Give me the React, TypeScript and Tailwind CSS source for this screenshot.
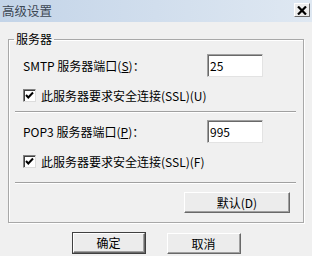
import React from "react";

const font = {
  fontFamily: '"Noto Sans CJK SC", "Noto Sans", sans-serif',
};

function Check() {
  return (
    <div className="w-[13px] h-[13px] bg-white border border-t-[#808080] border-l-[#808080] border-r-[#dcdcdc] border-b-[#dcdcdc] shadow-[inset_1px_1px_0_#404040] flex items-center justify-center">
      <svg width="9" height="9" viewBox="0 0 9 9">
        <path d="M1 4 L3.3 6.5 L8 1.5" stroke="#000" strokeWidth="2" fill="none" />
      </svg>
    </div>
  );
}

function Btn({ children, def, cls }: { children: React.ReactNode; def?: boolean; cls: string }) {
  const inner = (
    <div className="w-full h-full flex items-center justify-center bg-[#ececec] border border-t-white border-l-white border-r-[#696969] border-b-[#696969] shadow-[inset_-1px_-1px_0_#a0a0a0] text-[12px] leading-none text-black">
      {children}
    </div>
  );
  return def ? (
    <div className={`${cls} border border-[#404040]`}>{inner}</div>
  ) : (
    <div className={cls}>{inner}</div>
  );
}

function Input({ value }: { value: string }) {
  return (
    <div className="w-[56px] h-[23px] bg-white border border-t-[#a0a0a0] border-l-[#a0a0a0] border-r-[#e3e3e3] border-b-[#e3e3e3] shadow-[inset_1px_1px_0_#696969] flex items-center pl-[2px] text-[12px] leading-none text-black">
      {value}
    </div>
  );
}

function Sep() {
  return <div className="ml-[6px] mr-[7px] h-[2px] border-t border-t-[#a0a0a0] border-b border-b-white" />;
}

export default function App() {
  return (
    <div className="w-[312px] h-[256px] bg-[#f0f0f0] overflow-hidden" style={font}>
      <div className="h-[22px] flex items-center justify-between pl-[2px] pr-[2px] bg-[linear-gradient(to_right,#c3d4e8,#dfe8f2)]">
        <span className="text-[12.5px] leading-none text-[#3c4754]">高级设置</span>
        <div className="w-[16px] h-[14px] mb-[2px] bg-[#ececec] border border-t-white border-l-white border-r-[#696969] border-b-[#696969] flex items-center justify-center">
          <svg width="10" height="9" viewBox="0 0 10 9">
            <path d="M1 0.5 L9 8.5 M9 0.5 L1 8.5" stroke="#000" strokeWidth="2.2" fill="none" />
          </svg>
        </div>
      </div>
      <fieldset className="mx-[8px] mt-[10px] border border-[#a8a8a8] shadow-[1px_1px_0_#fff,inset_1px_1px_0_#fff] pb-[9px]">
        <legend className="ml-[5px] px-[2px] text-[12px] leading-[14px] text-black">服务器</legend>
        <div className="flex items-center mt-[8px]">
          <div className="pl-[14px] w-[198px] text-[12px] leading-none text-black">
            SMTP 服务器端口(<span className="underline">S</span>)：
          </div>
          <Input value="25" />
        </div>
        <div className="flex items-center gap-[5px] pl-[14px] mt-[12px] text-[12px] leading-[13px] text-black">
          <Check />
          <span>此服务器要求安全连接(SSL)(U)</span>
        </div>
        <div className="mt-[9px]">
          <Sep />
        </div>
        <div className="flex items-center mt-[7px]">
          <div className="pl-[14px] w-[198px] text-[12px] leading-none text-black">
            POP3 服务器端口(<span className="underline">P</span>)：
          </div>
          <Input value="995" />
        </div>
        <div className="flex items-center gap-[5px] pl-[14px] mt-[12px] text-[12px] leading-[13px] text-black">
          <Check />
          <span>此服务器要求安全连接(SSL)(F)</span>
        </div>
        <div className="mt-[14px]">
          <Sep />
        </div>
        <div className="flex justify-end pr-[13px] mt-[8px]">
          <Btn cls="w-[106px] h-[21px]">默认(D)</Btn>
        </div>
      </fieldset>
      <div className="flex justify-center gap-[21px] mt-[9px]">
        <Btn def cls="w-[74px] h-[22px]">确定</Btn>
        <Btn cls="w-[74px] h-[21px] mt-[1px]">取消</Btn>
      </div>
    </div>
  );
}
